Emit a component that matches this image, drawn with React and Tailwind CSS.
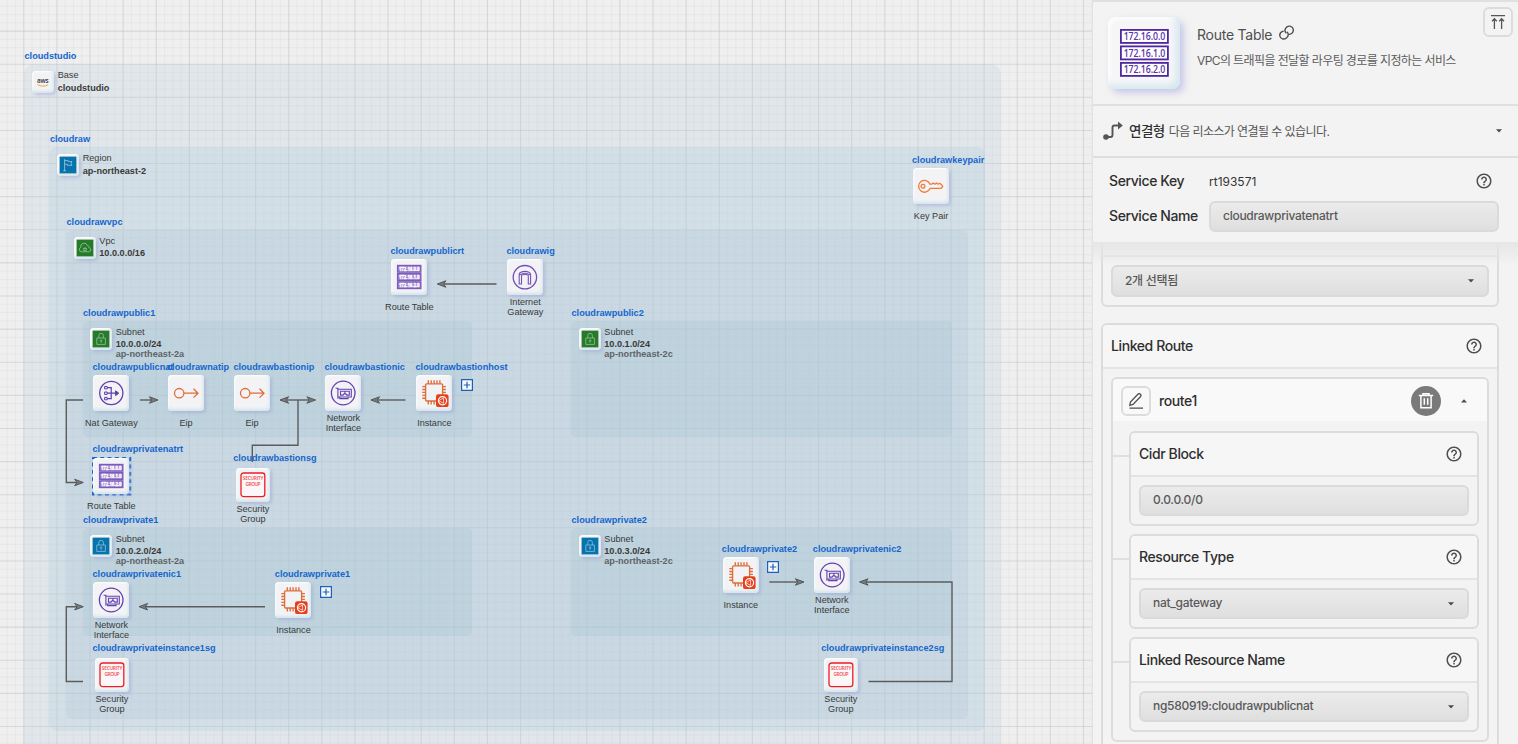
import React from "react";
import { MdHelpOutline } from "react-icons/md";

const LATIN = "font-['Liberation_Sans',Arial,sans-serif]";

function Ubuntu() {
  return (
    <g transform="translate(20 19.3)">
      <rect width="12.6" height="12.8" rx="2.2" fill="#e63f1c" />
      <circle cx="6.5" cy="6.4" r="4.1" fill="none" stroke="#fff" strokeWidth="1.2" />
      <path d="M2.6 6.4 7.6 3.8v5.2z" fill="none" stroke="#ffe9e2" strokeWidth="0.8" />
    </g>
  );
}

function Glyph({ kind }) {
  if (kind === "rt")
    return (
      <svg viewBox="0 0 36 36" className="size-full">
        {["172.16.0.0", "172.16.1.0", "172.16.2.0"].map((t, i) => (
          <g key={t} transform={`translate(5.9 ${5.8 + i * 8.2})`}>
            <rect x="0.7" y="0.7" width="23.2" height="6.6" fill="#a48dd2" stroke="#7c5bbd" strokeWidth="1.4" />
            <text x="12.3" y="6.2" textAnchor="middle" textLength="20.6" lengthAdjust="spacingAndGlyphs" fontSize="6" fontWeight="700" fontFamily="Open Sans, sans-serif" fill="#fff" stroke="#fff" strokeWidth="0.4">{t}</text>
          </g>
        ))}
      </svg>
    );
  if (kind === "ig")
    return (
      <svg viewBox="0 0 36 36" className="size-full" fill="none" stroke="#7350b8">
        <circle cx="17.9" cy="18.2" r="11.7" strokeWidth="1.3" />
        <path d="M12.2 25V15.5q0-1.6 1.6-2.3 4.1-1.7 8.2 0 1.6.7 1.6 2.3V25h-2.3v-8q0-1-1-1.2-2.4-.5-4.8 0-1 .2-1 1.2V25zM12.7 15.8q5.2-3 10.4 0" strokeWidth="1.1" />
      </svg>
    );
  if (kind === "nat")
    return (
      <svg viewBox="0 0 36 36" className="size-full" fill="none" stroke="#5f3ead">
        <circle cx="18.3" cy="18" r="11.6" strokeWidth="1.3" />
        <path d="M13.2 12.7h5v11h-5M13.2 18.2h11" strokeWidth="1.2" />
        <path d="M22.6 15.8l3.2 2.4-3.2 2.4z" fill="#5f3ead" />
        <path d="M11.6 11.5h2.6v2.4h-2.6zM11.6 17h2.6v2.4h-2.6zM11.6 22.4h2.6v2.4h-2.6z" fill="#f3f3f6" />
      </svg>
    );
  if (kind === "eip")
    return (
      <svg viewBox="0 0 36 36" className="size-full" fill="none" stroke="#df6d37" strokeWidth="1.3">
        <circle cx="11.2" cy="18.2" r="4.7" />
        <path d="M16 18.2h13.5M25.5 13.8l4.5 4.4-4.5 4.4" />
      </svg>
    );
  if (kind === "nic")
    return (
      <svg viewBox="0 0 36 36" className="size-full" fill="none" stroke="#6340b0">
        <circle cx="18.2" cy="18" r="11.8" strokeWidth="1.3" />
        <path d="M10.6 13.2h2.3v10.5M12.9 14.3h13.4v7.7H12.9M14.7 22v1.6h8.3V22" strokeWidth="1.1" />
        <path d="M15.5 16.2h8.8v3.9h-2.5l-1-1.2h-1.8l-1 1.2h-2.5zM19.9 16.2v2.6" strokeWidth="1.1" />
      </svg>
    );
  if (kind === "vm")
    return (
      <svg viewBox="0 0 36 36" className="size-full" fill="none" stroke="#dc6e3c" strokeWidth="1.35">
        <rect x="9.6" y="8.8" width="17" height="17.2" rx="1" />
        <path d="M12.3 5.3v3.5M15.2 5.3v3.5M18.1 5.3v3.5M21 5.3v3.5M23.9 5.3v3.5M12.3 26v3.5M15.2 26v3.5M18.1 26v3.5M6.3 11.6h3.3M6.3 14.5h3.3M6.3 17.4h3.3M6.3 20.3h3.3M6.3 23.2h3.3M26.6 11.6h3.3M26.6 14.5h3.3M26.6 17.4h3.3" />
        <g stroke="none"><Ubuntu /></g>
      </svg>
    );
  if (kind === "key")
    return (
      <svg viewBox="0 0 36 36" className="size-full" fill="none" stroke="#ee7b3a" strokeWidth="1.3" strokeLinejoin="round">
        <path d="M17 16.2a5.9 5.9 0 1 0 0 4.2h11.2l1.6-2-1.8-2.2-1.4-1-1.5 1-1.6-1.2-1.6 1.2-1.6-1.2-1.6 1.2z" />
        <circle cx="10" cy="18.2" r="1.9" />
      </svg>
    );
  return (
    <svg viewBox="0 0 34 34" className="size-full">
      <rect x="5" y="5" width="23.8" height="23.6" rx="2.6" fill="#fbf7f8" stroke="#ee1c25" strokeWidth="1.3" />
      <text x="17" y="12.1" textAnchor="middle" textLength="20.5" fontSize="4.8" fontWeight="600" fontFamily="Open Sans, sans-serif" fill="#f0474d">SECURITY</text>
      <text x="17" y="18.2" textAnchor="middle" textLength="15" fontSize="4.8" fontWeight="600" fontFamily="Open Sans, sans-serif" fill="#f0474d">GROUP</text>
    </svg>
  );
}

function GroupGlyph({ kind }) {
  if (kind === "aws")
    return (
      <svg viewBox="0 0 22 22" className="size-full">
        <text x="10.8" y="12" textAnchor="middle" textLength="11.6" fontSize="6.4" fontWeight="600" fontFamily="Open Sans, sans-serif" fill="#2c3440">aws</text>
        <path d="M5.5 13.6c3.4 2 7.4 2 10.6.2" fill="none" stroke="#f6a04c" strokeWidth="1" />
      </svg>
    );
  const green = kind === "vpc" || kind === "lock-green";
  return (
    <svg viewBox="0 0 22 22" className="size-full" fill="none">
      <rect x="2.6" y="2.6" width="16.8" height="16.8" fill={green ? "#277a2b" : "#0673ac"} />
      {kind === "region" && (
        <path d="M7.6 5.2v11.6M6.2 16.8h2.8M7.6 6.6h3.6v1h3.8l-1 1.8 1 1.9h-4.6v-1H7.6" stroke="#a5cbe0" strokeWidth="0.8" />
      )}
      {kind === "vpc" && (
        <path d="M7.2 14.8a2.4 2.4 0 0 1-.5-4.5 3.5 3.5 0 0 1 6.8-1.6 2.4 2.4 0 0 1 1.9 2.3 2 2 0 0 1 0 3.8zM9.6 13.4v-2h2.8v2zM11 11.4v-1.2" stroke="#a9d2ab" strokeWidth="0.7" />
      )}
      {kind.startsWith("lock") && (
        <g stroke={green ? "#8fc493" : "#8dbfdc"} strokeWidth="0.8">
          <path d="M6.8 10h8.6v6.4H6.8zM8.8 10V7.6a2.3 2.3 0 0 1 4.6 0V10M11.1 13.4v1.4" />
          <circle cx="11.1" cy="12.6" r="0.8" />
        </g>
      )}
    </svg>
  );
}

const TILE = "rounded-[4px] bg-[#f3f3f5] shadow-[2px_2px_3px_rgba(160,165,215,0.5),inset_-1px_-2px_3px_rgba(205,228,236,0.9),inset_1px_1px_2px_#ffffff]";

function Title({ x, y, children }) {
  return (
    <span className="absolute -translate-y-1/2 text-[9.17px] leading-[12px] font-bold whitespace-nowrap text-[#1466ce]" style={{ left: x, top: y }}>
      {children}
    </span>
  );
}

const SUBNET = "bg-[rgba(160,194,208,0.25)]";

const regions = [
  { t: "cloudstudio", x: 24, y: 64, w: 977, h: 700, l: ["Base", "cloudstudio"], k: "aws", ix: 32.4, iy: 71, c: "bg-[rgba(184,204,218,0.25)]", g: 13, r: "rounded-[10px]" },
  { t: "cloudraw", x: 49.4, y: 147, w: 935.5, h: 583.5, l: ["Region", "ap-northeast-2"], k: "region", ix: 57.4, iy: 154, c: "bg-[rgba(170,203,218,0.25)]", g: 13, r: "rounded-[8px]" },
  { t: "cloudrawvpc", x: 66, y: 229.5, w: 901.5, h: 489.5, l: ["Vpc", "10.0.0.0/16"], k: "vpc", ix: 74, iy: 237, c: "bg-[rgba(175,198,214,0.28)]", g: 12, r: "rounded-[6px]" },
  { t: "cloudrawpublic1", x: 82.5, y: 321, w: 389, h: 115.5, l: ["Subnet", "10.0.0.0/24", "ap-northeast-2a"], k: "lock-green", ix: 90.4, iy: 328, c: SUBNET, g: 12, r: "rounded-[5px]" },
  { t: "cloudrawpublic2", x: 571, y: 321, w: 381, h: 115.5, l: ["Subnet", "10.0.1.0/24", "ap-northeast-2c"], k: "lock-green", ix: 579, iy: 328, c: SUBNET, g: 12, r: "rounded-[5px]" },
  { t: "cloudrawprivate1", x: 82.5, y: 527.5, w: 389, h: 108.5, l: ["Subnet", "10.0.2.0/24", "ap-northeast-2a"], k: "lock-blue", ix: 90.4, iy: 535, c: SUBNET, g: 12, r: "rounded-[5px]" },
  { t: "cloudrawprivate2", x: 571, y: 527.5, w: 381, h: 108.5, l: ["Subnet", "10.0.3.0/24", "ap-northeast-2c"], k: "lock-blue", ix: 579, iy: 535, c: SUBNET, g: 12, r: "rounded-[5px]" },
];

const nodes = [
  { t: "cloudrawkeypair", tx: 912, x: 913, y: 168, k: "key", l: ["Key Pair"] },
  { t: "cloudrawpublicrt", tx: 390.4, x: 391.3, y: 259, k: "rt", l: ["Route Table"] },
  { t: "cloudrawig", tx: 506.4, x: 507.2, y: 259, k: "ig", l: ["Internet", "Gateway"] },
  { t: "cloudrawpublicnat", tx: 92.5, x: 93.3, y: 375, k: "nat", l: ["Nat Gateway"] },
  { t: "cloudrawnatip", tx: 167, x: 168, y: 375, k: "eip", l: ["Eip"] },
  { t: "cloudrawbastionip", tx: 233.4, x: 234, y: 375, k: "eip", l: ["Eip"] },
  { t: "cloudrawbastionic", tx: 324.5, x: 325.3, y: 375, k: "nic", l: ["Network", "Interface"] },
  { t: "cloudrawbastionhost", tx: 415.5, x: 416.3, y: 375, k: "vm", l: ["Instance"] },
  { t: "cloudrawprivatenatrt", tx: 92.5, x: 93.3, y: 457.7, k: "rt", l: ["Route Table"], sel: true },
  { t: "cloudrawbastionsg", tx: 233.2, x: 235.8, y: 468, k: "sg", l: ["Security", "Group"] },
  { t: "cloudrawprivatenic1", tx: 92.5, x: 93.3, y: 582, k: "nic", l: ["Network", "Interface"] },
  { t: "cloudrawprivate1", tx: 274.8, x: 275.4, y: 582, k: "vm", l: ["Instance"] },
  { t: "cloudrawprivateinstance1sg", tx: 92.5, x: 94.8, y: 658, k: "sg", l: ["Security", "Group"] },
  { t: "cloudrawprivate2", tx: 721.8, x: 722.7, y: 557, k: "vm", l: ["Instance"] },
  { t: "cloudrawprivatenic2", tx: 812.8, x: 813.7, y: 557, k: "nic", l: ["Network", "Interface"] },
  { t: "cloudrawprivateinstance2sg", tx: 821.2, x: 823.7, y: 658, k: "sg", l: ["Security", "Group"] },
];

const links = [
  "M496.5 284H440",
  "M83 400H66.3V482.5H80",
  "M140 400H155",
  "M283 400H312",
  "M252.3 462V445.3H298V400",
  "M405.5 400H374",
  "M265 606.7H142",
  "M83 681.5H66.3V606.7H80",
  "M769.3 582H801",
  "M868.6 681.5H952V582H863",
];
const heads = [
  [437.3, 284, 180], [83.3, 482.5, 0], [158, 400, 0], [280, 400, 180], [315.5, 400, 0], [371, 400, 180],
  [139, 606.7, 180], [83.3, 606.7, 0], [804, 582, 0], [859.5, 582, 180],
];
const expanders = [[461, 378.7], [320, 585.5], [767, 561]];

function Canvas() {
  return (
    <div className={"relative h-full w-[1092px] shrink-0 overflow-hidden bg-[#efefef] text-[#3a3a3a] " + LATIN}>
      <svg className="absolute inset-0 size-full" stroke="#c9c9c9">
        {Array.from({ length: 133 }, (_, i) => (
          <path key={i} d={`M${(23.8 + (i - 2) * 8.279).toFixed(2)} 0V744`} strokeWidth="1.1" opacity={(i - 2) % 4 === 0 ? 0.6 : 0.17} />
        ))}
        {Array.from({ length: 91 }, (_, i) => (
          <path key={i} d={`M0 ${(64.2 + (i - 7) * 8.279).toFixed(2)}H1092`} strokeWidth="1.1" opacity={(i - 7) % 4 === 0 ? 0.6 : 0.17} />
        ))}
      </svg>
      {regions.map((r) => (
        <div key={r.t} className={"absolute " + r.c + " " + r.r} style={{ left: r.x, top: r.y, width: r.w, height: r.h }} />
      ))}
      <svg className="absolute inset-0 size-full">
        {links.map((d) => (
          <path key={d} d={d} fill="none" stroke="#5c5c5c" strokeWidth="1.4" />
        ))}
        {heads.map(([x, y, a]) => (
          <path key={x + "-" + y} transform={`translate(${x} ${y}) rotate(${a})`} d="M0 0L-8.6-3.2L-6.2 0L-8.6 3.2Z" fill="#7a7d80" stroke="#555" strokeWidth="1" strokeLinejoin="round" />
        ))}
      </svg>
      {regions.map((r) => (
        <React.Fragment key={r.t}>
          <Title x={r.x + 0.5} y={r.y - 7.8}>{r.t}</Title>
          <div className={"absolute size-[22px] " + TILE} style={{ left: r.ix, top: r.iy }}>
            <GroupGlyph kind={r.k} />
          </div>
          <div className="absolute flex flex-col text-[9.15px] whitespace-nowrap" style={{ left: r.ix + 25.3, top: r.iy - 2 }}>
            <span style={{ height: r.g }} className="leading-[12px]">{r.l[0]}</span>
            <span className="h-[10px] leading-[12px] font-bold">{r.l[1]}</span>
            {r.l[2] && <span className="leading-[12px] font-bold text-[#5e6468]">{r.l[2]}</span>}
          </div>
        </React.Fragment>
      ))}
      {nodes.map((n) => {
        const s = n.k === "sg" ? 34 : 36;
        const two = n.l.length > 1;
        return (
          <React.Fragment key={n.t + n.x}>
            <Title x={n.tx} y={n.k === "sg" ? n.y - 10 : n.sel ? 449 : n.y - 8.2}>{n.t}</Title>
            {n.sel && (
              <svg className="absolute size-[40px]" style={{ left: n.x - 1.8, top: n.y - 1.2 }}>
                <rect x="1" y="1" width="37.2" height="36.4" fill="none" stroke="#1868d0" strokeWidth="2" strokeDasharray="3.9 3.4" />
              </svg>
            )}
            <div className={"absolute " + TILE} style={{ left: n.x, top: n.y, width: s, height: s }}>
              <Glyph kind={n.k} />
            </div>
            <div
              className="absolute flex w-[80px] flex-col items-center text-[9.15px] leading-[10px] whitespace-nowrap"
              style={{ left: n.x + s / 2 - 39.9, top: n.y + (two ? (n.k === "sg" ? 37.2 : 38) : 43) }}
            >
              {n.l.map((t) => <span key={t} className={n.k === "sg" ? "leading-[9.5px]" : "leading-[10px]"}>{t}</span>)}
            </div>
          </React.Fragment>
        );
      })}
      {expanders.map(([x, y]) => (
        <svg key={x} className="absolute size-[12px]" viewBox="0 0 12 12" style={{ left: x, top: y }}>
          <path d="M.6.6h10.8v10.8H.6zM6 2.8v6.4M2.8 6h6.4" fill="#f6f8fb" stroke="#1e60b8" strokeWidth="1.2" />
        </svg>
      ))}
    </div>
  );
}

function Help() {
  return <MdHelpOutline className="size-[18px] text-[#4f4f4f]" />;
}

function Caret({ up }) {
  return (
    <svg className="h-[4px] w-[6px]" viewBox="0 0 6 4">
      <path d={up ? "M0 3.5 3 .3 6 3.5z" : "M0 .3 3 3.5 6 .3z"} fill="#4a4a4a" />
    </svg>
  );
}

function Label({ children, className = "" }) {
  return (
    <span className={"relative -top-px text-[14px] font-medium tracking-[-0.4px] text-[#2f2f2f] " + className}>{children}</span>
  );
}

function Field({ children, select, className = "" }) {
  return (
    <div className={"flex h-[31px] items-center justify-between rounded-[6px] border-2 border-[#dadada] bg-linear-to-b from-[#ebebeb] to-[#dfdfdf] pr-[13px] pl-3 text-[12px] font-medium tracking-[-0.27px] text-[#595959] " + className}>
      <span className="-mt-px">{children}</span>
      {select && <Caret />}
    </div>
  );
}

function Block({ title, children, select }) {
  return (
    <div className="relative h-[95px] rounded-[6px] border-2 border-[#dcdcdc]">
      <div className="absolute top-[22px] -left-[18px] h-[2px] w-4 bg-[#dfdfdf]" />
      <div className="flex h-[44px] items-center justify-between rounded-t-[4px] border-b-2 border-[#e4e4e4] bg-[#f6f6f6] pr-[14px] pl-2">
        <Label>{title}</Label>
        <Help />
      </div>
      <div className="p-2"><Field select={select}>{children}</Field></div>
    </div>
  );
}

function Panel() {
  return (
    <aside className="flex h-full min-w-0 flex-1 flex-col border-l border-[#e2e2e2] bg-[#f3f3f3] font-['Inter','Noto_Sans_CJK_KR',sans-serif] tracking-[-0.1px]">
      <header className="relative flex h-[106px] shrink-0 border-y-2 border-[#e0e0e0] pt-[15px] pl-[15px]">
        <div className="size-[72px] rounded-[8px] bg-[#f6f6f7] shadow-[4px_4px_7px_rgba(165,165,225,0.55),inset_-4px_-4px_6px_rgba(208,230,238,0.9),inset_2px_2px_4px_#ffffff]">
          <svg viewBox="0 0 72 72" className="size-full">
            {["172.16.0.0", "172.16.1.0", "172.16.2.0"].map((t, i) => (
              <g key={t} transform={`translate(12 ${12 + i * 16.5})`}>
                <rect x="0.9" y="0.9" width="47" height="13" fill="#fff" stroke="#4f27a3" strokeWidth="1.8" />
                <text x="24.4" y="11.3" textAnchor="middle" textLength="41.5" lengthAdjust="spacingAndGlyphs" fontSize="10.6" fontWeight="600" fontFamily="Open Sans, sans-serif" fill="#5a35aa">{t}</text>
              </g>
            ))}
          </svg>
        </div>
        <div className="ml-[17px] flex flex-col pt-[7px]">
          <div className="flex h-5 items-center gap-[7px] text-[14px] tracking-[-0.25px] text-[#4f4f4f]">
            <span>Route Table</span>
            <svg className="-mt-[4px] size-[15px]" viewBox="0 0 15 15" fill="none" stroke="#4f4f4f" strokeWidth="1.4" strokeLinecap="round">
              <path d="M10.6 9.4c2.6-.8 4-3 3.6-5.2C13.7 1.3 10.100 .2 7.700 2.100 6 3.700 5.500 6 6.900 7.700" />
              <path d="M4.200 6.100C1.600 6.900.500 9.200.9 11.200c.7 2.900 4.200 3.700 6.500 1.800C9.300 11.500 9.700 9.200 8.300 7.200" />
            </svg>
          </div>
          <p className="mt-[8px] text-[12px] leading-[18px] tracking-[-0.6px] text-[#5c5c5c]">VPC의 트래픽을 전달할 라우팅 경로를 지정하는 서비스</p>
        </div>
        <button className="absolute top-[5px] right-[5px] flex size-[30px] items-center justify-center rounded-[6px] border-2 border-[#dcdcdc]">
          <svg className="-mt-px size-[16px]" viewBox="0 0 16 16" fill="none" stroke="#555" strokeWidth="1.3">
            <path d="M1 1.6h14M4.4 15V5M2 7.2l2.4-2.6 2.4 2.6M11.6 15V5M9.2 7.2l2.4-2.6L14 7.2" />
          </svg>
        </button>
      </header>
      <div className="flex h-[52px] shrink-0 items-center border-b-2 border-[#dedede] pr-4 pl-[10px] text-[#555]">
        <svg className="size-[20px] shrink-0" viewBox="0 0 20 20">
          <circle cx="3" cy="16" r="2.8" fill="#555" />
          <path d="M3 16h4.5q2 0 2-2V6.5q0-2 2-2H16" fill="none" stroke="#555" strokeWidth="1.9" />
          <path d="M15 .6 19.8 4.5 15 8.4z" fill="#555" />
        </svg>
        <span className="ml-[6px] text-[13.5px] font-medium tracking-[-0.5px] text-[#2f2f2f]">연결형</span>
        <span className="relative top-px ml-[4px] flex-1 text-[12px] tracking-[-0.58px]">다음 리소스가 연결될 수 있습니다.</span>
        <Caret />
      </div>
      <div className="flex h-[84px] shrink-0 flex-col gap-[4px] pt-2 pr-[19px] pl-4">
        <div className="flex h-[31px] items-center">
          <Label className="w-[100px]">Service Key</Label>
          <span className="flex-1 text-[12px] tracking-normal text-[#333]">rt193571</span>
          <span className="-mt-px mr-[6px]"><Help /></span>
        </div>
        <div className="flex h-[31px] items-center">
          <Label className="w-[100px]">Service Name</Label>
          <Field className="flex-1">cloudrawprivatenatrt</Field>
        </div>
      </div>
      <div className="relative min-h-0 flex-1 overflow-hidden pr-[19px] pl-2">
        <div className="pointer-events-none absolute inset-x-0 top-0 z-10 h-[24px] bg-linear-to-b from-[#e6e6e6] to-transparent" />
        <section className="h-[65px] rounded-b-[6px] border-2 border-t-0 border-[#dcdcdc]">
          <div className="h-[15px] border-b-2 border-[#e4e4e4]" />
          <div className="p-2"><Field select className="h-[32px] tracking-[-0.7px]">2개 선택됨</Field></div>
        </section>
        <section className="mt-4 h-[460px] rounded-t-[6px] border-2 border-[#dcdcdc]">
          <div className="flex h-[44px] items-center justify-between rounded-t-[4px] border-b-2 border-[#e4e4e4] bg-[#f6f6f6] pr-[14px] pl-2">
            <Label>Linked Route</Label>
            <Help />
          </div>
          <div className="mx-2 mt-2 h-[365px] rounded-[6px] border-2 border-[#dcdcdc]">
            <div className="flex h-[42px] items-center rounded-t-[4px] bg-[#f9f9f9] pt-[2px] pr-[20px] pl-2">
              <div className="flex size-[30px] items-center justify-center rounded-[6px] border-2 border-[#dcdcdc]">
                <svg className="size-[16px]" viewBox="0 0 16 16" fill="none" stroke="#4f4f4f" strokeWidth="1.3">
                  <path d="M1.8 12.3 2.4 9 9.9 1.3a1.7 1.7 0 0 1 2.5 2.4L5 11.5zM1.5 15.2h13.5" />
                </svg>
              </div>
              <Label className="ml-2 flex-1 -top-[2px]">route1</Label>
              <div className="mr-[20px] flex size-[30px] items-center justify-center rounded-full bg-[#7a7a7a]">
                <svg className="size-[16px]" viewBox="0 0 16 16" fill="none" stroke="#fff" strokeWidth="1.5">
                  <path d="M.8 2.5h14.4M5 2V.8h6V2M2.9 2.5v12.3h10.2V2.5M6.3 5.3v6.4M9.7 5.3v6.4" />
                </svg>
              </div>
              <Caret up />
            </div>
            <div className="flex flex-col gap-2 pt-[10px] pr-2 pl-4">
              <Block title="Cidr Block">0.0.0.0/0</Block>
              <Block title="Resource Type" select>nat_gateway</Block>
              <Block title="Linked Resource Name" select>ng580919:cloudrawpublicnat</Block>
            </div>
          </div>
        </section>
      </div>
    </aside>
  );
}

export default function App() {
  return (
    <div className="flex h-[744px] w-[1518px] overflow-hidden">
      <Canvas />
      <Panel />
    </div>
  );
}
